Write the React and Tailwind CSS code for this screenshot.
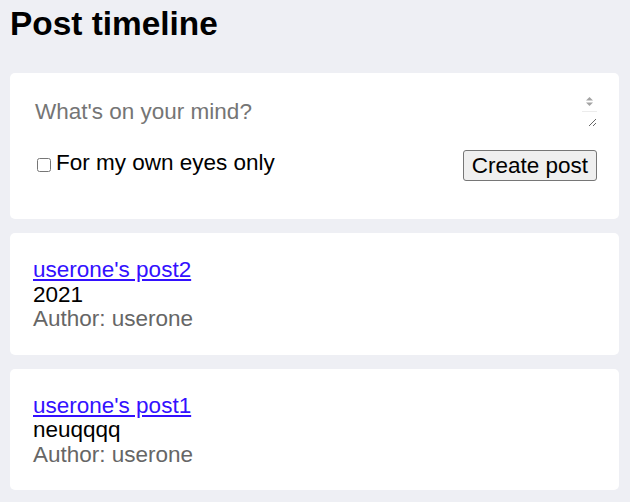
import React from "react";

const font = { fontFamily: '"Liberation Sans", Arial, sans-serif' };

function Post({ title, body }) {
  return (
    <div className="bg-white rounded-[5px] pl-[23px] pr-[22px] pt-[25px] pb-[23px] text-[22.5px] leading-[24.5px]">
      <a href="#" className="text-[#3311ff] underline">{title}</a>
      <div className="text-black">{body}</div>
      <div className="text-[#666666]">Author: userone</div>
    </div>
  );
}

export default function App() {
  return (
    <div className="min-h-screen bg-[#eeeff4] pb-[13px]" style={font}>
      <h1 className="pl-[10px] pt-[5px] text-[33.4px] leading-[38px] font-bold text-black">Post timeline</h1>
      <div className="flex flex-col gap-[14px] pl-[10px] pr-[11px] mt-[30px]">
        <div className="bg-white rounded-[5px] pl-[23px] pr-[22px] pt-[22px] pb-[38px]">
          <div className="relative">
            <textarea
              rows={1}
              placeholder="What's on your mind?"
              className="block w-full h-[32px] border-0 outline-none pt-[4px] pl-[2px] pr-[18px] pb-0 text-[22.5px] leading-[25.85px] overflow-hidden placeholder:text-[#757575]"
            />
            <div className="absolute right-0 top-0 w-[15px] h-[16px] pointer-events-none flex justify-center pt-[1px]">
              <svg width="9" height="11" viewBox="0 0 9 11">
                <path d="M4.5 1 L8 4.5 L1 4.5 Z" fill="#a3a3a3" />
                <path d="M1 6.5 L8 6.5 L4.5 10 Z" fill="#a3a3a3" />
              </svg>
            </div>
            <div className="absolute right-0 top-[16px] w-[15px] h-[1px] bg-[#ececec] pointer-events-none" />
          </div>
          <div className="flex items-start justify-between mt-[23px] h-[31px]">
            <label className="flex items-start text-[22.5px] leading-[25.85px] text-black">
              <input type="checkbox" className="w-[14px] h-[14px] ml-[4px] mr-[5px] mt-[8px]" />
              For my own eyes only
            </label>
            <button className="h-[31px] px-[8px] bg-[#efefef] border border-[#767676] rounded-[3px] text-[22.5px] leading-[25px] text-black">
              Create post
            </button>
          </div>
        </div>
        <Post title="userone's post2" body="2021" />
        <Post title="userone's post1" body="neuqqqq" />
      </div>
    </div>
  );
}
